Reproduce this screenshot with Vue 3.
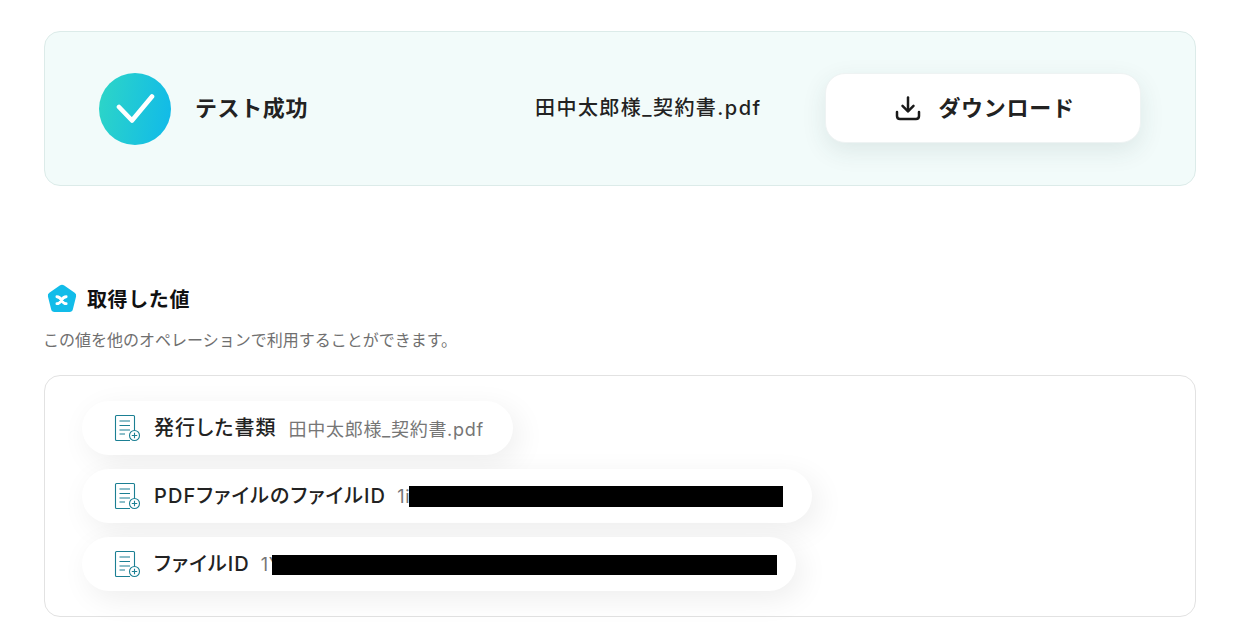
<script setup>
const rows = [
  { label: '発行した書類', value: '田中太郎様_契約書.pdf', width: 0, h: 0, trail: 29, overlap: 0, gap: 12, drop: 0 },
  { label: 'PDFファイルのファイルID', value: '1i', width: 374, h: 21, trail: 29, overlap: 1, gap: 11, drop: 0 },
  { label: 'ファイルID', value: '1Y', width: 505, h: 20, trail: 19, overlap: 10, gap: 11, drop: 2 },
]
</script>

<template>
  <div class="page">
    <section class="result">
      <div class="status">
        <span class="check">
          <svg width="40" height="30" viewBox="0 0 40 30" fill="none">
            <path d="M4 13 L17 26.5 L37 2.5" stroke="#fff" stroke-width="4.6" stroke-linecap="round" stroke-linejoin="round" />
          </svg>
        </span>
        <span class="status-text">テスト成功</span>
      </div>
      <span class="file">田中太郎様_契約書.pdf</span>
      <button class="download">
        <svg width="26" height="26" viewBox="0 0 26 26" fill="none" stroke="#1a1a1a" stroke-width="2.5" stroke-linecap="round" stroke-linejoin="round">
          <path d="M13 2.5 V16" />
          <path d="M7.5 10.8 L13 16.3 L18.5 10.8" />
          <path d="M2 17 V21 Q2 24 5 24 H21 Q24 24 24 21 V17" />
        </svg>
        <span class="download-text">ダウンロード</span>
      </button>
    </section>

    <div class="heading">
      <svg class="penta" width="30" height="29" viewBox="0 0 32 29.5" preserveAspectRatio="none">
        <path d="M13.6 1.6 Q16 0 18.4 1.6 L29.5 9 Q31.6 10.4 31 12.8 L27.6 25.6 Q27 28.4 24 28.4 H8 Q5 28.4 4.4 25.6 L1 12.8 Q.4 10.4 2.5 9 Z" fill="#12bce9" />
        <path d="M10.5 13 Q13.5 13 15.5 16.5 Q17.5 20 20.5 20 M20.5 13 Q17.5 13 15.5 16.5 Q13.5 20 10.5 20" fill="none" stroke="#fff" stroke-width="2.9" stroke-linecap="round" />
      </svg>
      <span class="heading-text">取得した値</span>
    </div>
    <p class="desc">この値を他のオペレーションで利用することができます。</p>

    <section class="values">
      <div v-for="row in rows" :key="row.label" class="pill" :style="{ paddingRight: row.trail + 'px' }">
        <svg class="doc" width="27" height="28" viewBox="0 0 27 28" fill="none" stroke="#1b7f93" stroke-width="1.1">
          <path d="M20.5 17 V2.5 Q20.5 1.5 19.5 1.5 H2.5 Q1.5 1.5 1.5 2.5 V25.5 Q1.5 26.5 2.5 26.5 H16" />
          <path d="M5.5 7 H16 M5.5 11.5 H16 M5.5 16 H16 M5.5 20 H11" />
          <circle cx="20.5" cy="21.5" r="5" fill="#fff" />
          <path d="M20.5 18.8 V24.2 M17.8 21.5 H23.2" />
        </svg>
        <span class="label" :style="{ marginRight: row.gap + 'px' }">{{ row.label }}</span>
        <span class="value">{{ row.value }}<i v-if="row.width" class="mask" :style="{ width: row.width + 'px', height: row.h + 'px', marginLeft: -row.overlap + 'px', marginTop: row.drop + 'px' }"></i></span>
      </div>
    </section>
  </div>
</template>

<style>
html, body { margin: 0; background: #fff; }
</style>

<style scoped>
.page {
  width: 1260px;
  height: 634px;
  box-sizing: border-box;
  padding: 31px 64px 0 44px;
  font-family: Inter, "Noto Sans CJK JP", sans-serif;
  color: #222;
  overflow: hidden;
}
.result {
  height: 155px;
  box-sizing: border-box;
  border: 1px solid #dcebe9;
  border-radius: 16px;
  background: #f2fbfa;
  display: flex;
  align-items: center;
  padding: 0 54px;
}
.status { display: flex; align-items: center; gap: 24px; width: 436px; }
.check {
  width: 72px;
  height: 72px;
  border-radius: 50%;
  background: linear-gradient(100deg, #2ed6c6, #10b9ea);
  display: flex;
  align-items: center;
  justify-content: center;
}
.status-text { font-size: 22px; font-weight: 700; color: #222; letter-spacing: .6px; margin-bottom: 6px; }
.file { font-size: 20px; font-weight: 500; width: 290px; letter-spacing: 1.45px; white-space: nowrap; margin-bottom: 4px; }
.download {
  width: 316px;
  height: 70px;
  margin-top: -2px;
  padding: 0 0 0 4px;
  border: 1px solid #eef3f3;
  border-radius: 20px;
  background: #fff;
  box-shadow: 0 8px 24px rgba(40, 70, 70, .1);
  display: flex;
  align-items: center;
  justify-content: center;
  gap: 17px;
  font: 700 22px Inter, "Noto Sans CJK JP", sans-serif;
  color: #222;
}
.download-text { letter-spacing: .7px; margin-bottom: 3px; }
.heading {
  display: flex;
  align-items: center;
  gap: 10px;
  margin-top: 98px;
  height: 30px;
  font-size: 20px;
  font-weight: 700;
  color: #111;
}
.heading-text { letter-spacing: .6px; margin-bottom: 2px; }
.penta { margin-left: 3px; margin-bottom: 1px; }
.desc {
  margin: 15px 0 0 -1px;
  font-size: 16px;
  line-height: 22px;
  color: #6f6f6f;
}
.values {
  margin-top: 24px;
  height: 242px;
  box-sizing: border-box;
  border: 1px solid #e2e2e2;
  border-radius: 16px;
  padding: 25px 37px;
  display: flex;
  flex-direction: column;
  align-items: flex-start;
  gap: 14px;
}
.pill {
  height: 54px;
  box-sizing: border-box;
  padding-left: 32px;
  border-radius: 27px;
  background: #fff;
  box-shadow: 6px 8px 30px rgba(0, 0, 0, .07);
  display: flex;
  align-items: center;
  white-space: nowrap;
}
.doc { margin-right: 13px; }
.label {
  font-size: 20px;
  font-weight: 500;
  color: #222;
  font-feature-settings: "palt";
  letter-spacing: 1.1px;
  margin-bottom: 3px;
}
.value { font-size: 18px; color: #767676; display: flex; align-items: center; letter-spacing: .7px; }
.mask { display: block; background: #000; }
</style>
